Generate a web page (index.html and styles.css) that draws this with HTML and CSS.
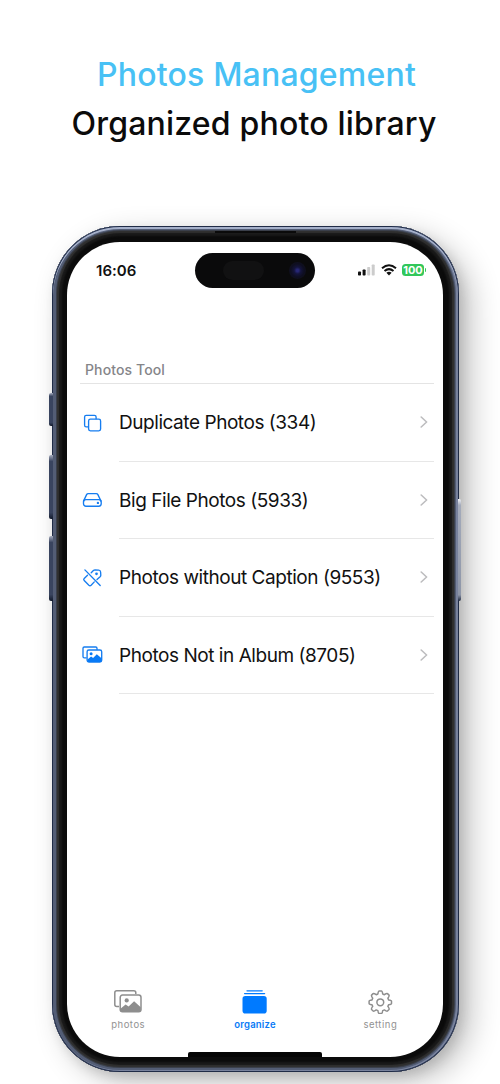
FILE: index.html
```html
<!DOCTYPE html>
<html lang="en">
<head>
<meta charset="utf-8">
<title>Photos Management</title>
<link rel="stylesheet" href="styles.css">
</head>
<body>
<header class="headline">
  <h1 class="headline-title"><span>Photos Management</span></h1>
  <p class="headline-sub"><span>Organized photo library</span></p>
</header>
<main class="phone">
  <i class="key key-action"></i><i class="key key-up"></i><i class="key key-down"></i><i class="key key-power"></i>
  <i class="speaker"></i>
  <section class="screen">
    <div class="status">
      <span class="clock">16:06</span>
      <div class="island"><i class="sensor"></i><i class="lens"></i></div>
      <div class="indicators">
        <svg width="17" height="12" viewBox="0 0 17 12"><g fill="#111"><rect y="7.5" width="3" height="4" rx=".8"/><rect x="4.6" y="5.5" width="3" height="6" rx=".8"/></g><g fill="#ccc"><rect x="9.2" y="3" width="3" height="8.5" rx=".8"/><rect x="13.7" y=".5" width="3" height="11" rx=".8"/></g></svg>
        <svg width="16" height="12" viewBox="0 0 16 12"><g fill="none" stroke="#111" stroke-width="2"><path d="M1 4.3Q8-1.8 15 4.3M3.5 7.1Q8 3.2 12.5 7.1"/></g><path d="M5.4 8.7Q8 6.8 10.6 8.7L8 11.5Z" fill="#111"/></svg>
        <span class="battery">100</span>
      </div>
    </div>
    <h2 class="section-title"><span>Photos Tool</span></h2>
    <ul class="tools">
      <li class="tool">
        <svg class="tool-icon" viewBox="0 0 22 20"><path d="M7 13.9H5.2Q3.6 13.9 3.6 12.3V4Q3.6 2.4 5.2 2.4h8.3q1.6 0 1.6 1.6v1.8"/><rect x="7.6" y="6.1" width="12" height="11.8" rx="1.8"/></svg>
        <div class="tool-body"><span class="label">Duplicate Photos (334)</span><svg class="chevron" viewBox="0 0 8 12"><path d="M1.2 1 6.6 6 1.2 11"/></svg></div>
      </li>
      <li class="tool">
        <svg class="tool-icon" viewBox="0 0 22 20"><path d="M2.5 11.1 5.6 4.6Q6.1 3.6 7.3 3.6h7.9q1.2 0 1.7 1l3.1 6.5"/><rect x="2.5" y="9.6" width="17.7" height="6.6" rx="2.4"/><circle cx="16.9" cy="12.9" r=".5"/></svg>
        <div class="tool-body"><span class="label">Big File Photos (5933)</span><svg class="chevron" viewBox="0 0 8 12"><path d="M1.2 1 6.6 6 1.2 11"/></svg></div>
      </li>
      <li class="tool">
        <svg class="tool-icon" viewBox="0 0 22 20"><path d="M3.9 1.9 19.2 17.5M10.2 4.8l2.2-2.2q.7-.7 1.7-.7l3.6.2q1.8.1 1.9 1.9l.2 3q.1 1-.7 1.8L16 11.6M6.5 7.2 3.2 10.4q-1 1.1 0 2.1l4.7 4.7q1.1 1 2.2 0l3.2-3.3"/><circle cx="15.5" cy="5.8" r=".7"/></svg>
        <div class="tool-body"><span class="label">Photos without Caption (9553)</span><svg class="chevron" viewBox="0 0 8 12"><path d="M1.2 1 6.6 6 1.2 11"/></svg></div>
      </li>
      <li class="tool">
        <svg class="tool-icon" viewBox="0 0 22 20"><path d="M5.2 12.8H3.3Q2 12.8 2 11.5V3.3Q2 2 3.3 2h11.4Q16 2 16 3.3v1.2"/><rect x="6.1" y="5" width="14.6" height="12" rx="1.8"/><path class="solid" d="m6.5 14.5 3.6-2.9 2 1.3 3.7-3.7 4.7 4v2.7q0 1.1-1.2 1.1H7.7q-1.2 0-1.2-1.2Z"/><circle class="solid" cx="10.1" cy="8.7" r="1.5"/></svg>
        <div class="tool-body"><span class="label">Photos Not in Album (8705)</span><svg class="chevron" viewBox="0 0 8 12"><path d="M1.2 1 6.6 6 1.2 11"/></svg></div>
      </li>
    </ul>
    <nav class="tabs">
      <a class="tab tab-photos">
        <svg width="30" height="26" viewBox="0 0 30 26"><g fill="none" stroke="#8e8e8e" stroke-width="1.5"><path d="M6 18.4H3.8Q1.8 18.4 1.8 16.4V4.7q0-2 2-2h17q2 0 2 2v1.4"/><rect x="7.2" y="7.1" width="20.8" height="16.6" rx="2.3"/></g><path d="m7.4 20.7 5.2-4.3 3 2 5.5-5.2 6.7 6v2.4q0 2-2 2H9.4q-2 0-2-2Z" fill="#8e8e8e"/><circle cx="13.7" cy="12.4" r="2.1" fill="#8e8e8e"/></svg>
        <span>photos</span>
      </a>
      <a class="tab active">
        <svg width="30" height="26" viewBox="0 0 30 26"><rect x="2.5" y="8" width="24.2" height="17.5" rx="2.8" fill="#007aff"/><path d="M4.6 5.6h20M7 2.8h15.2" stroke="#007aff" stroke-width="1.3" stroke-linecap="round"/></svg>
        <span>organize</span>
      </a>
      <a class="tab">
        <svg width="30" height="26" viewBox="0 0 30 26"><g fill="none" stroke="#8e8e8e" stroke-width="1.5" stroke-linejoin="round"><path d="M12.9 6 Q13.3 3.1 14.2 3.1h2.2q.9 0 1.3 2.9l1.7.7q2.4-1.7 3.1-1.1l1.5 1.5q.6.7-1.1 3.1l.7 1.7q2.9.4 2.9 1.3v2.2q0 .9-2.9 1.3l-.7 1.7q1.7 2.4 1.1 3.1l-1.5 1.5q-.7.6-3.1-1.1l-1.7.7q-.4 2.9-1.3 2.9h-2.2q-.9 0-1.3-2.9l-1.7-.7q-2.4 1.7-3.1 1.1l-1.5-1.5q-.6-.7 1.1-3.1L7 16.7q-2.9-.4-2.9-1.3v-2.2q0-.9 2.9-1.3l.7-1.7Q6 7.8 6.6 7.1l1.5-1.5q.7-.6 3.1 1.1Z"/><circle cx="15.3" cy="14.3" r="3.4"/></g></svg>
        <span>setting</span>
      </a>
    </nav>
    <i class="home-indicator"></i>
  </section>
</main>
</body>
</html>
```
FILE: styles.css
```css
* { box-sizing: border-box; }
body {
  margin: 0;
  width: 500px;
  height: 1084px;
  overflow: hidden;
  background: #fff;
  color: #111;
  font-family: Inter, "Liberation Sans", sans-serif;
}
.headline {
  height: 226px;
  padding-top: 50px;
  text-align: center;
}
.headline-title, .headline-sub {
  margin: 0;
  font-size: 32px;
  line-height: 49px;
  font-weight: 450;
  white-space: nowrap;
}
.headline-title { color: #48c1f5; letter-spacing: .2px; padding-left: 13px; }
.headline-sub { color: #0b0b0b; letter-spacing: .2px; padding-left: 8px; }
.phone {
  position: relative;
  width: 407px;
  height: 846px;
  margin-left: 52px;
  padding: 16px 16px 15px 15px;
  border-radius: 68px;
  background: #0b0b0b;
  box-shadow:
    inset 0 0 0 1px #202c47,
    inset 0 2px 0 1px #a5b0ca,
    inset -1px 0 0 2px #78829d,
    inset 0 0 0 4px #535d75,
    inset 0 0 0 5px #3b404b,
    inset 0 0 1px 7px #303030,
    inset 0 0 2px 10px #1a1a1a,
    12px 10px 30px rgba(0,0,0,.24),
    4px 5px 12px rgba(0,0,0,.12);
}
.key {
  position: absolute;
  left: -3px;
  width: 4px;
  border-radius: 2px 0 0 2px;
  background: linear-gradient(#a4aabc, #39445f 10%, #39445f 90%, #121a2c);
}
.key-action { top: 167px; height: 33px; }
.key-up { top: 229px; height: 64px; }
.key-down { top: 310px; height: 65px; }
.key-power {
  top: 273px;
  left: 406px;
  width: 3px;
  height: 102px;
  border-radius: 0 2px 2px 0;
  background: linear-gradient(#f1f3f8, #a4abbb 6%, #8e96a8 94%, #202b42);
}
.speaker {
  position: absolute;
  top: 5px;
  left: 163px;
  width: 81px;
  height: 2px;
  background: #0b0b0b;
}
.screen {
  position: relative;
  display: flex;
  flex-direction: column;
  height: 815px;
  border-radius: 53px;
  overflow: hidden;
  background: #fff;
}
.status {
  display: grid;
  grid-template-columns: 128px 120px 1fr;
  align-items: center;
  height: 57px;
}
.clock { padding-left: 29px; font-size: 15px; font-weight: 600; letter-spacing: .05px; }
.island { position: relative; height: 35px; margin-top: -1px; border-radius: 18px; background: #0a0a0b; }
.sensor {
  position: absolute;
  top: 8px;
  left: 28px;
  width: 41px;
  height: 19px;
  border-radius: 10px;
  background: #111112;
}
.lens {
  position: absolute;
  top: 9px;
  right: 9px;
  width: 17px;
  height: 17px;
  border-radius: 50%;
  background: radial-gradient(circle, #272775 0 10%, #14143c 28%, #0e0e20 55%, #111118);
}
.indicators { display: flex; align-items: center; gap: 6px; padding-left: 43px; margin-top: -1px; }
.battery {
  position: relative;
  width: 22px;
  margin-left: -1px;
  border-radius: 3.5px;
  background: #32c75a;
  color: #fff;
  font-size: 11px;
  font-weight: 700;
  line-height: 12px;
  text-align: center;
}
.battery::after {
  content: "";
  position: absolute;
  right: -2px;
  top: 4px;
  width: 1px;
  height: 4px;
  border-radius: 0 1px 1px 0;
  background: #32c75a;
}
.section-title {
  height: 85px;
  margin: 0 9px 0 13px;
  padding: 62px 0 0 5px;
  border-bottom: 1px solid #e4e4e4;
  color: #858589;
  font-size: 14px;
  font-weight: 550;
  line-height: 18px;
  letter-spacing: .12px;
}
.tools { margin: 0; padding: 0; list-style: none; }
.tool { display: flex; align-items: center; height: 77.5px; padding: 0 9px 0 14px; }
.tool-icon { width: 22px; height: 20px; margin-right: 16px; fill: none; stroke: #167df0; stroke-width: 1.35; stroke-linecap: round; stroke-linejoin: round; }
.tool-icon .solid { fill: #087af6; stroke: none; }
.tool-body {
  display: flex;
  flex: 1;
  align-items: center;
  justify-content: space-between;
  height: 77.5px;
  padding-right: 6px;
  border-bottom: 1px solid #e7e7e7;
}
.label { padding-top: 2px; font-size: 19px; line-height: 24px; white-space: nowrap; letter-spacing: -.45px; }
.chevron { width: 8px; height: 12px; fill: none; stroke: #bdbdbf; stroke-width: 1.6; stroke-linecap: round; stroke-linejoin: round; }
.tabs {
  display: grid;
  grid-template-columns: repeat(3, 1fr);
  margin-top: auto;
  height: 69px;
}
.tab {
  display: flex;
  flex-direction: column;
  align-items: center;
  color: #929292;
  font-size: 9.5px;
  line-height: 13px;
  letter-spacing: .5px;
}
.tab svg { margin-bottom: 4px; }
.tab-photos { padding-right: 3px; }
.active { color: #087af6; font-weight: 600; letter-spacing: .2px; }
.home-indicator {
  position: absolute;
  left: 121px;
  bottom: 0;
  width: 134px;
  height: 5px;
  border-radius: 2px 2px 0 0;
  background: #050505;
}
```
